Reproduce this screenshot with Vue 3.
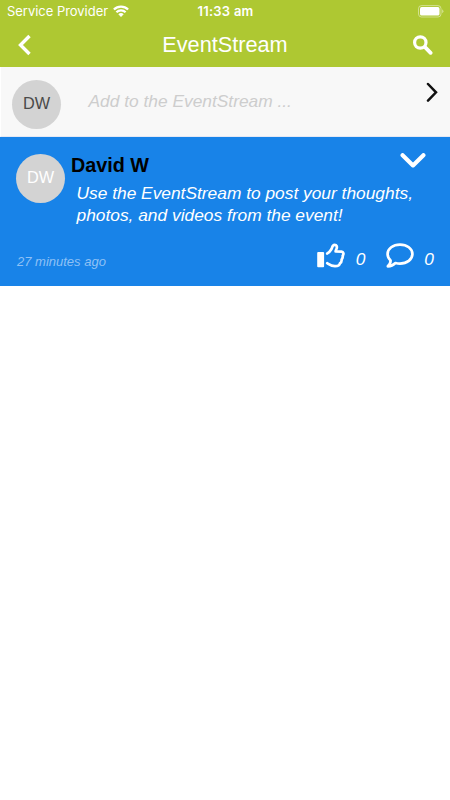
<script setup>
import { ref } from 'vue'

const initials = 'DW'

// Posts shown in the stream
const posts = ref([
  {
    id: 1,
    author: 'David W',
    text: 'Use the EventStream to post your thoughts, photos, and videos from the event!',
    time: '27 minutes ago',
    likes: 0,
    comments: 0
  }
])

const like = (post) => {
  post.likes++
}
</script>

<template>
  <div class="screen">
    <header class="header">
      <!-- Phone status bar -->
      <div class="status-bar">
        <div class="carrier">
          <span>Service Provider</span>
          <svg class="wifi" width="16" height="12" viewBox="0 0 16 12">
            <path d="M8 12 L5.3 9.3 A3.8 3.8 0 0 1 10.7 9.3 Z" fill="#fff" />
            <path d="M3.4 7.3 A6.6 6.6 0 0 1 12.6 7.3" fill="none" stroke="#fff" stroke-width="2.3" />
            <path d="M0.9 4.5 A10.2 10.2 0 0 1 15.1 4.5" fill="none" stroke="#fff" stroke-width="2.3" />
          </svg>
        </div>
        <span class="clock">11:33 am</span>
        <svg class="battery" width="26" height="13" viewBox="0 0 26 13">
          <rect x="0.5" y="0.6" width="22.5" height="11.4" rx="3" fill="none" stroke="#fff" stroke-opacity="0.45" />
          <rect x="2" y="2.1" width="19.5" height="8.4" rx="1.6" fill="#fff" />
          <path d="M24.2 4.3 Q26.6 6.3 24.2 8.3 Z" fill="#fff" fill-opacity="0.5" />
        </svg>
      </div>

      <!-- Navigation -->
      <div class="nav">
        <svg class="back" width="14" height="22" viewBox="0 0 14 22">
          <path d="M11.5 2 L2.5 11 L11.5 20" fill="none" stroke="#fff" stroke-width="3.4" />
        </svg>
        <h1>EventStream</h1>
        <svg class="search" width="20" height="20" viewBox="0 0 20 20">
          <circle cx="7.3" cy="7.5" r="5.7" fill="none" stroke="#fff" stroke-width="3.2" />
          <path d="M12 12.2 L17.6 17.8" stroke="#fff" stroke-width="3.8" stroke-linecap="round" />
        </svg>
      </div>
    </header>

    <!-- New post row -->
    <div class="compose">
      <div class="avatar dark">{{ initials }}</div>
      <span class="placeholder">Add to the EventStream ...</span>
      <svg class="go" width="12" height="20" viewBox="0 0 12 20">
        <path d="M2 2 L10 10.3 L2 18.6" fill="none" stroke="#111" stroke-width="2.5" stroke-linecap="round" />
      </svg>
    </div>

    <article v-for="post in posts" :key="post.id" class="post">
      <div class="post-top">
        <div class="avatar">{{ initials }}</div>
        <div class="content">
          <div class="post-head">
            <h2>{{ post.author }}</h2>
            <svg class="more" width="26" height="16" viewBox="0 0 26 16">
              <path d="M2.6 2.2 L13 12.4 L23.4 2.2" fill="none" stroke="#fff" stroke-width="4.2" stroke-linecap="round" stroke-linejoin="round" />
            </svg>
          </div>
          <p>{{ post.text }}</p>
        </div>
      </div>
      <div class="post-footer">
        <span class="time">{{ post.time }}</span>
        <div class="action likes" @click="like(post)">
          <svg width="28" height="26" viewBox="0 0 28 26">
            <rect x="0.2" y="9" width="6.9" height="15.2" rx="1" fill="#fff" />
            <path
              d="M10.2 10.6 C12.4 9.8 13.2 8 14.6 5.8 C15.4 4.4 15.2 1.8 17.6 1.8 C19.8 1.8 20.2 4 19.6 5.6 C19.2 6.8 18.6 7.4 18.6 8.5 L24.4 8.6 C26.6 8.8 27 11 25.7 12.8 C26 14.4 25.4 15.6 24.6 16.6 C24.8 18.2 24 19.6 22.9 20.4 C22.6 22.4 20.8 23.2 18 23.2 C14.6 23.2 13 22 10.2 20.2"
              fill="none" stroke="#fff" stroke-width="2.7" stroke-linecap="round" stroke-linejoin="round"
            />
          </svg>
          <span>{{ post.likes }}</span>
        </div>
        <div class="action comments">
          <svg width="28" height="26" viewBox="0 0 28 26">
            <path
              d="M14 1.6 C20.9 1.6 26.4 5.6 26.4 11 C26.4 16.4 20.9 20.6 14 20.6 C12.4 20.6 10.9 20.4 9.5 20 C7.3 22.2 4.6 23.2 1.8 23.3 C3.7 21.6 4.6 19.8 4.6 17.4 C2.6 15.6 1.6 13.4 1.6 11 C1.6 5.6 7.1 1.6 14 1.6 Z"
              fill="none" stroke="#fff" stroke-width="2.7" stroke-linejoin="round"
            />
          </svg>
          <span>{{ post.comments }}</span>
        </div>
      </div>
    </article>
  </div>
</template>

<style>
body {
  margin: 0;
  background: #fff;
}
</style>

<style scoped>
.screen {
  width: 450px;
  height: 800px;
  overflow: hidden;
  background: #fff;
  font-family: "Liberation Sans", Arial, sans-serif;
}
svg {
  display: block;
  flex-shrink: 0;
}
.header {
  height: 67px;
  background: #aec832;
  color: #fff;
}
.status-bar {
  display: grid;
  grid-template-columns: 1fr auto 1fr;
  align-items: center;
  height: 22px;
  padding: 0 6px 0 7px;
  font-family: Inter, sans-serif;
  font-size: 13px;
}
.carrier {
  display: flex;
  align-items: center;
  gap: 5px;
  letter-spacing: -0.03px;
}
.clock {
  font-weight: 600;
  letter-spacing: 0.25px;
}
.battery {
  justify-self: end;
}
.nav {
  display: flex;
  align-items: center;
  height: 45px;
  padding: 0 17px 0 18px;
}
h1 {
  flex: 1;
  margin: 0;
  padding-left: 5px;
  font-size: 21.7px;
  font-weight: normal;
  text-align: center;
}
.compose {
  display: flex;
  box-sizing: border-box;
  height: 70px;
  padding: 13px 12px 0 11px;
  border-left: 1px solid #fff;
  border-bottom: 1px solid #e4e8f4;
  background: #f8f8f8;
}
.avatar {
  flex-shrink: 0;
  width: 49px;
  height: 49px;
  border-radius: 50%;
  background: #d3d3d3;
  color: #fff;
  font-size: 16.3px;
  line-height: 47px;
  text-align: center;
}
.avatar.dark {
  color: #4a4a4a;
}
.placeholder {
  flex: 1;
  margin: 11px 0 0 27.5px;
  color: #cdcdcd;
  font-size: 17.35px;
  font-style: italic;
  line-height: 20px;
}
.go {
  margin-top: 2px;
}
.post {
  box-sizing: border-box;
  height: 149px;
  padding: 16.5px 16px 0;
  background: #1883e8;
  color: #fff;
}
.post-top {
  display: flex;
  height: 84.5px;
}
.content {
  flex: 1;
  padding-left: 6px;
}
.post-head {
  display: flex;
  justify-content: space-between;
  height: 28.5px;
  padding-right: 8px;
}
h2 {
  margin: 0;
  color: #000;
  font-size: 19.8px;
  line-height: 23px;
}
.more {
  margin-top: -1px;
}
p {
  margin: 0 0 0 5.5px;
  font-size: 17.35px;
  font-style: italic;
  line-height: 22px;
}
.post-footer {
  display: flex;
  align-items: flex-start;
  font-style: italic;
}
.time {
  margin: 15.5px 0 0 1px;
  color: #8fc1f5;
  font-size: 13px;
  line-height: 16px;
}
.action {
  display: flex;
  gap: 10.5px;
  margin-top: 5px;
  font-size: 17.35px;
  line-height: 32px;
}
.likes {
  margin-left: auto;
}
.comments {
  margin-left: 20.5px;
}
</style>
